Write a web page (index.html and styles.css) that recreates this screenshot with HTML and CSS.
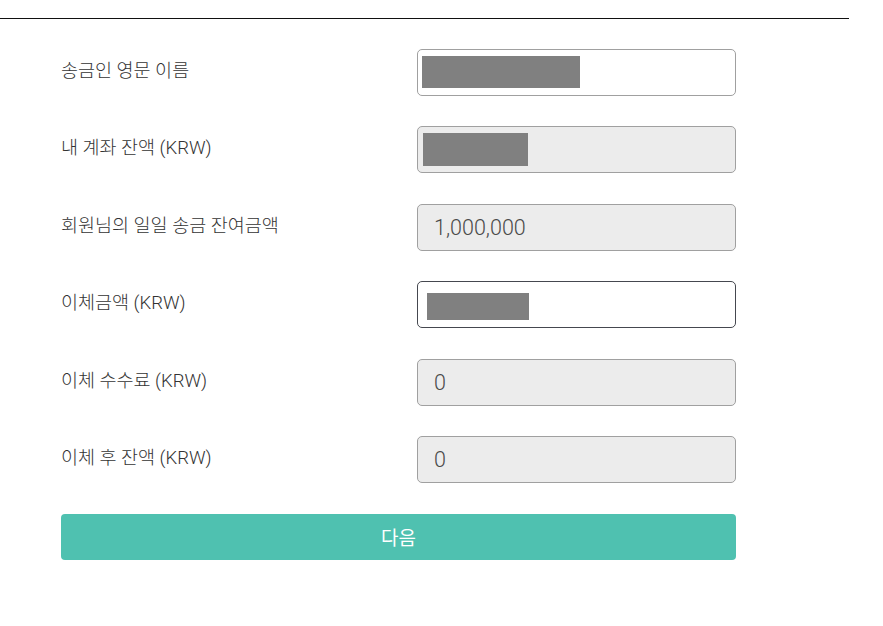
FILE: index.html
```html
<!DOCTYPE html>
<html lang="ko">
<head>
<meta charset="utf-8">
<link rel="stylesheet" href="styles.css">
</head>
<body>
<div class="page">
  <div class="rule"></div>
  <form class="form">
    <div class="row">
      <label class="label">송금인 영문 이름</label>
      <div class="field"><span class="mask mask-1"></span></div>
    </div>
    <div class="row">
      <label class="label">내 계좌 잔액 (KRW)</label>
      <div class="field disabled"><span class="mask mask-2"></span></div>
    </div>
    <div class="row">
      <label class="label">회원님의 일일 송금 잔여금액</label>
      <div class="field disabled"><span class="value">1,000,000</span></div>
    </div>
    <div class="row">
      <label class="label">이체금액 (KRW)</label>
      <div class="field focused"><span class="mask mask-3"></span></div>
    </div>
    <div class="row">
      <label class="label">이체 수수료 (KRW)</label>
      <div class="field disabled"><span class="value">0</span></div>
    </div>
    <div class="row">
      <label class="label">이체 후 잔액 (KRW)</label>
      <div class="field disabled"><span class="value">0</span></div>
    </div>
    <button type="button" class="next">다음</button>
  </form>
</div>
</body>
</html>
```

FILE: styles.css
```css
* { box-sizing: border-box; }
html, body { margin: 0; padding: 0; background: #fff; }
body {
  font-family: Roboto, "Noto Sans CJK KR", sans-serif;
  color: #333;
}
.page { width: 849px; padding-top: 18px; }
.rule { height: 1px; background: #111; }
.form {
  padding: 30px 0 0 61px;
  display: flex;
  flex-direction: column;
  gap: 30.4px;
  width: 736px;
}
.row {
  display: flex;
  align-items: flex-start;
  height: 47px;
}
.label {
  width: 356px;
  font-size: 18.5px;
  font-weight: 300;
  line-height: 22px;
  padding-top: 11px;
  color: #333;
}
.field {
  width: 319px;
  height: 47px;
  border: 1px solid #a0a0a0;
  border-radius: 5px;
  background: #fff;
  display: flex;
  align-items: center;
  padding: 0 16px;
  position: relative;
}
.field.disabled { background: #ececec; }
.field.focused { border-color: #45484f; }
.value { font-size: 21.5px; font-weight: 300; color: #4a4a4a; }
.mask { position: absolute; background: #808080; }
.mask-1 { left: 4px; top: 6px; width: 158px; height: 32px; }
.mask-2 { left: 5px; top: 6px; width: 105px; height: 33px; }
.mask-3 { left: 9px; top: 11px; width: 102px; height: 27px; }
.next {
  margin-top: 0.6px;
  width: 675px;
  height: 46px;
  border: none;
  border-radius: 4px;
  background: #4fc1b0;
  color: #fff;
  font-family: inherit;
  font-size: 19px;
}
```
